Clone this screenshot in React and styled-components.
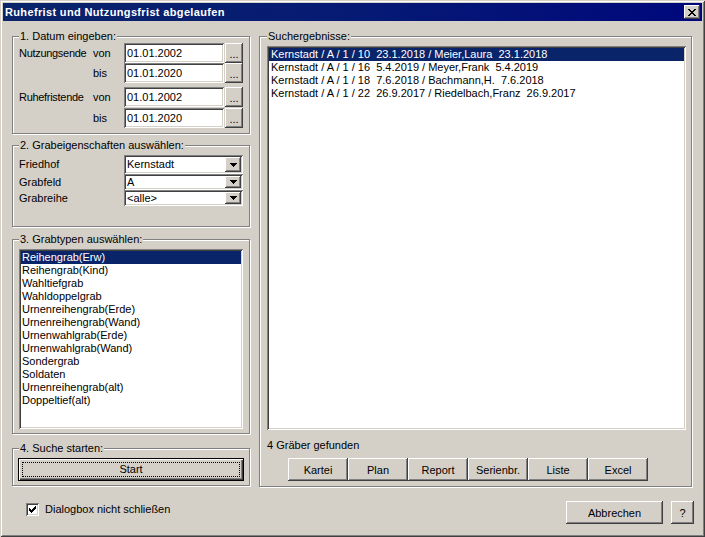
import React from 'react';
import styled, { createGlobalStyle } from 'styled-components';

const GlobalStyle = createGlobalStyle`
  html, body { margin: 0; padding: 0; background: #d4d0c8; }
  body { font-family: "Liberation Sans", Arial, sans-serif; font-size: 11px; }
`;

const raised = `
  box-shadow: inset -1px -1px #404040, inset 1px 1px #ffffff, inset -2px -2px #808080, inset 2px 2px #d4d0c8;
`;
const sunken = `
  box-shadow: inset 1px 1px #808080, inset -1px -1px #ffffff, inset 2px 2px #404040, inset -2px -2px #d4d0c8;
`;

const Window = styled.div`
  box-sizing: border-box;
  width: 705px;
  height: 537px;
  padding: 3px;
  background: #d4d0c8;
  box-shadow: inset 1px 1px #d4d0c8, inset -1px -1px #404040, inset 2px 2px #ffffff, inset -2px -2px #808080;
  display: flex;
  flex-direction: column;
  font-family: "Liberation Sans", Arial, sans-serif;
  font-size: 11px;
  color: #000;
`;

const TitleBar = styled.div`
  height: 18px;
  display: flex;
  align-items: center;
  justify-content: space-between;
  background: linear-gradient(90deg, #0a246a 0%, #061a74 50%, #00087c 100%);
  padding: 0 2px 0 2px;
`;

const TitleText = styled.span`
  color: #fff;
  font-weight: bold;
  font-size: 11px;
  letter-spacing: 0.35px;
  line-height: 18px;
`;

const CloseButton = styled.div`
  box-sizing: border-box;
  width: 16px;
  height: 14px;
  background: #d4d0c8;
  ${raised}
  display: flex;
  align-items: center;
  justify-content: center;
  padding-right: 1px;
`;

const Body = styled.div`
  flex: 1;
  display: flex;
  flex-direction: column;
  padding: 15px 10px 0 9px;
`;

const Main = styled.div`
  display: flex;
  gap: 9px;
  align-items: flex-start;
`;

const LeftColumn = styled.div`
  width: 238px;
  display: flex;
  flex-direction: column;
`;

const GroupBox = styled.div`
  box-sizing: border-box;
  width: ${p => p.$w}px;
  height: ${p => p.$h}px;
  margin-top: ${p => p.$mt || 0}px;
  border: 1px solid #808080;
  box-shadow: inset 1px 1px #ffffff, 1px 1px #ffffff;
  padding: 0 6px 0 ${p => p.$pl || 6}px;
  display: flex;
  flex-direction: column;
`;

const Legend = styled.span`
  align-self: flex-start;
  margin-top: -7px;
  padding: 0 1px;
  line-height: 13px;
  height: 13px;
  background: #d4d0c8;
  white-space: nowrap;
`;

const DateBlock = styled.div`
  display: flex;
  flex-direction: column;
`;

const FormRow = styled.div`
  display: flex;
  align-items: center;
  height: ${p => p.$h || 20}px;
  margin-top: ${p => p.$mt || 0}px;
`;

const Label = styled.span`
  width: ${p => p.$w}px;
  flex: none;
  white-space: nowrap;
  line-height: 13px;
  letter-spacing: ${p => p.$ls || 0}px;
`;

const Field = styled.div`
  box-sizing: border-box;
  width: 100px;
  height: 20px;
  background: #fff;
  ${sunken}
  padding: 3px 0 0 3px;
  line-height: 14px;
  white-space: nowrap;
`;

const DotsButton = styled.div`
  box-sizing: border-box;
  width: 18px;
  height: 20px;
  margin-left: 1px;
  background: #d4d0c8;
  ${raised}
  display: flex;
  justify-content: center;
  align-items: flex-end;
  padding-bottom: 4px;
  line-height: 10px;
  font-size: 11px;
`;

const ComboStack = styled.div`
  display: flex;
  flex-direction: column;
  margin-top: 3px;
`;

const Combo = styled.div`
  box-sizing: border-box;
  width: 119px;
  height: ${p => p.$h}px;
  background: #fff;
  ${sunken}
  display: flex;
  align-items: center;
  padding: 2px 2px 2px 3px;
`;

const ComboText = styled.span`
  flex: 1;
  white-space: nowrap;
  line-height: 13px;
`;

const ComboButton = styled.div`
  box-sizing: border-box;
  width: 16px;
  align-self: stretch;
  background: #d4d0c8;
  ${raised}
  display: flex;
  align-items: center;
  justify-content: center;
`;

const ListBox = styled.div`
  box-sizing: border-box;
  width: ${p => p.$w}px;
  height: ${p => p.$h}px;
  margin-top: 3px;
  background: #fff;
  ${sunken}
  padding: 2px;
  display: flex;
  flex-direction: column;
`;

const ListItem = styled.div`
  height: 13px;
  line-height: 13px;
  padding-left: ${p => p.$pl || 1}px;
  white-space: pre;
  background: ${p => (p.$selected ? '#0a246a' : 'transparent')};
  color: ${p => (p.$selected ? '#fff' : '#000')};
`;

const DefaultButton = styled.div`
  box-sizing: border-box;
  width: 226px;
  height: 23px;
  margin: 3px 0 0 -1px;
  border: 1px solid #000;
  background: #d4d0c8;
  box-shadow: inset 1px 1px #ffffff, inset -1px -1px #404040, inset -2px -2px #808080;
  padding: 3px;
  display: flex;
`;

const FocusRect = styled.div`
  flex: 1;
  border: 1px dotted #000;
  display: flex;
  align-items: center;
  justify-content: center;
  line-height: 13px;
`;

const StatusText = styled.div`
  margin-top: 9px;
  line-height: 13px;
  height: 13px;
`;

const ButtonRow = styled.div`
  display: flex;
  margin: 6px 0 0 21px;
`;

const PushButton = styled.div`
  box-sizing: border-box;
  width: ${p => p.$w}px;
  height: 23px;
  background: #d4d0c8;
  ${raised}
  display: flex;
  align-items: center;
  justify-content: center;
  line-height: 13px;
  padding-top: 1px;
`;

const Footer = styled.div`
  display: flex;
  align-items: flex-start;
  margin: 14px -2px 0 14px;
`;

const CheckArea = styled.div`
  display: flex;
  align-items: center;
  gap: 5px;
  margin-top: 2px;
`;

const CheckBox = styled.div`
  box-sizing: border-box;
  width: 13px;
  height: 13px;
  background: #fff;
  ${sunken}
  display: flex;
  align-items: center;
  justify-content: center;
`;

const CheckLabel = styled.span`
  line-height: 13px;
  margin-left: 1px;
`;

const FooterButtons = styled.div`
  margin-left: auto;
  display: flex;
  gap: 8px;
`;

const CloseGlyph = () => (
  <svg width="8" height="7" viewBox="0 0 8 7" shapeRendering="crispEdges">
    <path
      fill="#000"
      d="M0 0h2v1H0zM6 0h2v1H6zM1 1h2v1H1zM5 1h2v1H5zM2 2h4v1H2zM3 3h2v1H3zM2 4h4v1H2zM1 5h2v1H1zM5 5h2v1H5zM0 6h2v1H0zM6 6h2v1H6z"
    />
  </svg>
);

const ArrowGlyph = () => (
  <svg width="7" height="4" viewBox="0 0 7 4" shapeRendering="crispEdges">
    <path fill="#000" d="M0 0h7v1H0zM1 1h5v1H1zM2 2h3v1H2zM3 3h1v1H3z" />
  </svg>
);

const CheckGlyph = () => (
  <svg width="7" height="7" viewBox="0 0 7 7" shapeRendering="crispEdges">
    <path
      fill="#000"
      d="M6 0h1v1H6zM5 1h2v1H5zM0 2h1v1H0zM4 2h3v1H4zM0 3h2v1H0zM3 3h3v1H3zM0 4h5v1H0zM1 5h3v1H1zM2 6h1v1H2z"
    />
  </svg>
);

const grabTypes = [
  'Reihengrab(Erw)',
  'Reihengrab(Kind)',
  'Wahltiefgrab',
  'Wahldoppelgrab',
  'Urnenreihengrab(Erde)',
  'Urnenreihengrab(Wand)',
  'Urnenwahlgrab(Erde)',
  'Urnenwahlgrab(Wand)',
  'Sondergrab',
  'Soldaten',
  'Urnenreihengrab(alt)',
  'Doppeltief(alt)',
];

const results = [
  'Kernstadt / A / 1 / 10  23.1.2018 / Meier,Laura  23.1.2018',
  'Kernstadt / A / 1 / 16  5.4.2019 / Meyer,Frank  5.4.2019',
  'Kernstadt / A / 1 / 18  7.6.2018 / Bachmann,H.  7.6.2018',
  'Kernstadt / A / 1 / 22  26.9.2017 / Riedelbach,Franz  26.9.2017',
];

const dateRows = [
  { label: 'Nutzungsende', sub: 'von', value: '01.01.2002', mt: 0 },
  { label: '', sub: 'bis', value: '01.01.2020', mt: 0 },
  { label: 'Ruhefristende', sub: 'von', value: '01.01.2002', mt: 4 },
  { label: '', sub: 'bis', value: '01.01.2020', mt: 1 },
];

const combos = [
  { label: 'Friedhof', value: 'Kernstadt', h: 19 },
  { label: 'Grabfeld', value: 'A', h: 16 },
  { label: 'Grabreihe', value: '<alle>', h: 16 },
];

const actions = ['Kartei', 'Plan', 'Report', 'Serienbr.', 'Liste', 'Excel'];

export default function App() {
  return (
    <>
      <GlobalStyle />
      <Window>
        <TitleBar>
          <TitleText>Ruhefrist und Nutzungsfrist abgelaufen</TitleText>
          <CloseButton>
            <CloseGlyph />
          </CloseButton>
        </TitleBar>
        <Body>
          <Main>
            <LeftColumn>
              <GroupBox $w={238} $h={98}>
                <Legend>1. Datum eingeben:</Legend>
                <DateBlock>
                  {dateRows.map((r, i) => (
                    <FormRow key={i} $mt={r.mt}>
                      <Label $w={74} $ls={-0.3}>{r.label}</Label>
                      <Label $w={31}>{r.sub}</Label>
                      <Field>{r.value}</Field>
                      <DotsButton>...</DotsButton>
                    </FormRow>
                  ))}
                </DateBlock>
              </GroupBox>

              <GroupBox $w={238} $h={82} $mt={11}>
                <Legend>2. Grabeigenschaften auswählen:</Legend>
                <ComboStack>
                  {combos.map(c => (
                    <FormRow key={c.label} $h={c.h}>
                      <Label $w={105}>{c.label}</Label>
                      <Combo $h={c.h}>
                        <ComboText>{c.value}</ComboText>
                        <ComboButton>
                          <ArrowGlyph />
                        </ComboButton>
                      </Combo>
                    </FormRow>
                  ))}
                </ComboStack>
              </GroupBox>

              <GroupBox $w={238} $h={195} $mt={12}>
                <Legend>3. Grabtypen auswählen:</Legend>
                <ListBox $w={224} $h={180}>
                  {grabTypes.map((t, i) => (
                    <ListItem key={t} $selected={i === 0}>
                      {t}
                    </ListItem>
                  ))}
                </ListBox>
              </GroupBox>

              <GroupBox $w={238} $h={38} $mt={14}>
                <Legend>4. Suche starten:</Legend>
                <DefaultButton>
                  <FocusRect>Start</FocusRect>
                </DefaultButton>
              </GroupBox>
            </LeftColumn>

            <GroupBox $w={433} $h={451} $pl={7}>
              <Legend>Suchergebnisse:</Legend>
              <ListBox $w={419} $h={384}>
                {results.map((r, i) => (
                  <ListItem key={r} $selected={i === 0} $pl={2}>
                    {r}
                  </ListItem>
                ))}
              </ListBox>
              <StatusText>4 Gräber gefunden</StatusText>
              <ButtonRow>
                {actions.map(a => (
                  <PushButton key={a} $w={60}>
                    {a}
                  </PushButton>
                ))}
              </ButtonRow>
            </GroupBox>
          </Main>

          <Footer>
            <CheckArea>
              <CheckBox>
                <CheckGlyph />
              </CheckBox>
              <CheckLabel>Dialogbox nicht schließen</CheckLabel>
            </CheckArea>
            <FooterButtons>
              <PushButton $w={97}>Abbrechen</PushButton>
              <PushButton $w={23}>?</PushButton>
            </FooterButtons>
          </Footer>
        </Body>
      </Window>
    </>
  );
}
